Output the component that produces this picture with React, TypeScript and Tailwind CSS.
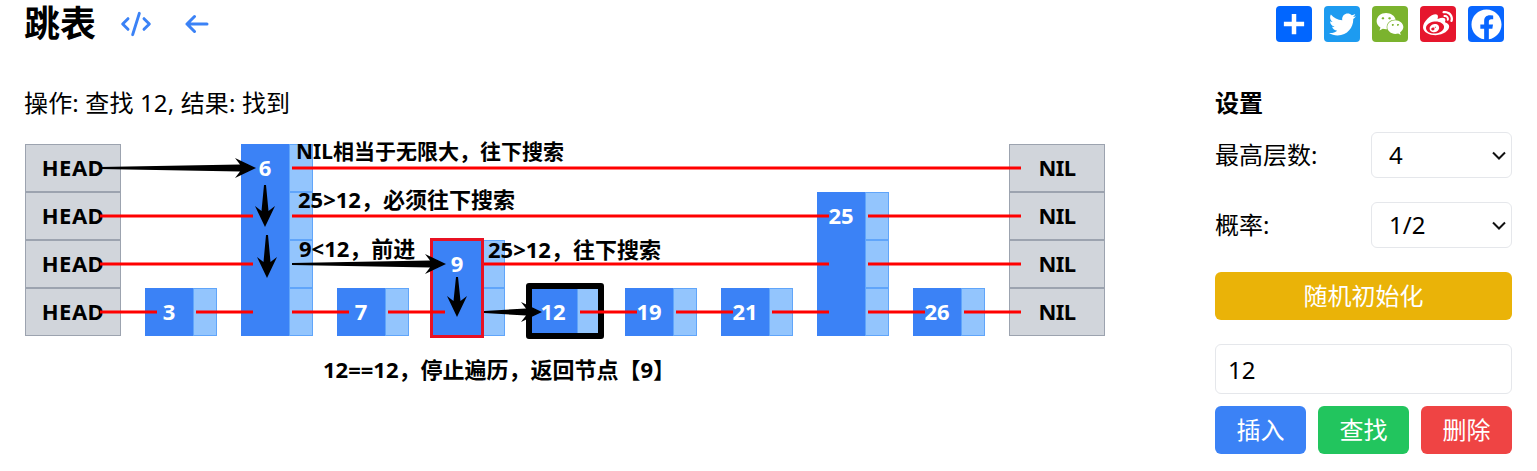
import React from 'react';
import { CodeXml } from 'lucide-react';
import { FaFacebook, FaTwitter, FaWeibo, FaWeixin } from 'react-icons/fa';

type Node = { value: number; levels: number };

const nodes: Node[] = [
  { value: 3, levels: 1 },
  { value: 6, levels: 4 },
  { value: 7, levels: 1 },
  { value: 9, levels: 2 },
  { value: 12, levels: 1 },
  { value: 19, levels: 1 },
  { value: 21, levels: 1 },
  { value: 25, levels: 3 },
  { value: 26, levels: 1 },
];

// red pointers, in page coordinates
const redLines: [number, number, number][] = [
  [292, 1021, 168],
  [100, 253, 216],
  [292, 829, 216],
  [868, 1021, 216],
  [100, 253, 264],
  [484, 829, 264],
  [868, 1021, 264],
  [100, 157, 312],
  [196, 253, 312],
  [292, 349, 312],
  [388, 445, 312],
  [580, 637, 312],
  [676, 733, 312],
  [772, 829, 312],
  [868, 925, 312],
  [964, 1021, 312],
];

function Arrow({ x1, y1, x2, y2 }: { x1: number; y1: number; x2: number; y2: number }) {
  const len = Math.hypot(x2 - x1, y2 - y1);
  const ux = (x2 - x1) / len;
  const uy = (y2 - y1) / len;
  const pt = (along: number, side: number) =>
    `${x1 + ux * along - uy * side},${y1 + uy * along + ux * side}`;
  const head = 21;
  const points = [
    pt(0, -1),
    pt(len - head + 5, -3.5),
    pt(len - head, -10),
    pt(len, 0),
    pt(len - head, 10),
    pt(len - head + 5, 3.5),
    pt(0, 1),
  ].join(' ');
  return <polygon points={points} fill="#000" />;
}

function Column({ node }: { node: Node }) {
  return (
    <div className="flex h-[192px] w-[72px] items-end">
      <div
        className={
          node.levels === 4
            ? 'h-[192px] w-12 bg-[#3b82f6]'
            : node.levels === 3
              ? 'h-36 w-12 bg-[#3b82f6]'
              : node.levels === 2
                ? 'h-24 w-12 bg-[#3b82f6]'
                : 'h-12 w-12 bg-[#3b82f6]'
        }
      >
        <div className="flex h-12 items-center justify-center text-[22px] font-bold text-white">{node.value}</div>
      </div>
      <div className="flex w-6 flex-col">
        {Array.from({ length: node.levels }).map((_, i) => (
          <div key={i} className="h-12 border border-[#60a5fa] bg-[#93c5fd]" />
        ))}
      </div>
    </div>
  );
}

function EndColumn({ label }: { label: string }) {
  return (
    <div className="flex w-24 flex-col">
      {[0, 1, 2, 3].map(i => (
        <div
          key={i}
          className={
            label === 'HEAD'
              ? 'flex h-12 items-center justify-center border border-[#9ca3af] bg-[#d1d5db] text-[22px] font-bold tracking-[0.5px] text-black'
              : 'flex h-12 items-center justify-center border border-[#9ca3af] bg-[#d1d5db] text-[22px] font-bold tracking-[-0.5px] text-black'
          }
        >
          {label}
        </div>
      ))}
    </div>
  );
}

function SelectBox({ value, options }: { value: string; options: string[] }) {
  return (
    <div className="relative h-[46px] w-[141px]">
      <select
        defaultValue={value}
        className="h-full w-full appearance-none rounded-md border border-[#e5e7eb] bg-white pl-[17px] text-2xl"
      >
        {options.map(o => (
          <option key={o}>{o}</option>
        ))}
      </select>
      <svg className="pointer-events-none absolute top-[17px] right-[6px]" width="14" height="12" viewBox="0 0 14 12">
        <path d="M1 3.5l6 6 6-6" fill="none" stroke="#111" strokeWidth="2" />
      </svg>
    </div>
  );
}

function Diagram() {
  return (
    <div className="relative mt-[25px] ml-px h-[192px] w-[1080px]">
      <div className="flex gap-6">
        <EndColumn label="HEAD" />
        {nodes.map(n => (
          <Column key={n.value} node={n} />
        ))}
        <EndColumn label="NIL" />
      </div>

      {/* highlighted nodes */}
      <div className="absolute top-[94px] left-[405px] h-[100px] w-[54px] border-[3px] border-[#e81123]" />
      <div className="absolute top-[139px] left-[501px] h-[56px] w-[78px] rounded-[3px] border-[6px] border-black" />

      <svg className="absolute top-[-144px] left-[-25px]" width="1130" height="340">
        {redLines.map(([x1, x2, y], i) => (
          <line key={i} x1={x1} x2={x2} y1={y} y2={y} stroke="#ff0000" strokeWidth="3" />
        ))}
        <Arrow x1={100} y1={168} x2={256} y2={168} />
        <Arrow x1={265} y1={185} x2={265} y2={227} />
        <Arrow x1={267} y1={235} x2={267} y2={278} />
        <Arrow x1={292} y1={264} x2={446} y2={264} />
        <Arrow x1={457} y1={277} x2={457} y2={317} />
        <Arrow x1={484} y1={312} x2={542} y2={312} />
      </svg>

      <span className="absolute top-[-7px] left-[271px] text-[21px] leading-7 font-bold whitespace-nowrap text-black">
        NIL相当于无限大，往下搜索
      </span>
      <span className="absolute top-[41px] left-[273px] text-[22px] leading-7 font-bold whitespace-nowrap text-black">
        25&gt;12，必须往下搜索
      </span>
      <span className="absolute top-[90px] left-[274px] text-[22px] leading-7 font-bold whitespace-nowrap text-black">
        9&lt;12，前进
      </span>
      <span className="absolute top-[91px] left-[463px] text-[22px] leading-7 font-bold whitespace-nowrap text-black">
        25&gt;12，往下搜索
      </span>
      <span className="absolute top-[211px] left-[298px] text-[22px] leading-7 font-bold whitespace-nowrap text-black">
        12==12，停止遍历，返回节点【9】
      </span>
    </div>
  );
}

function ShareIcons() {
  return (
    <div className="flex gap-3">
      <a className="flex h-9 w-9 items-center justify-center rounded bg-[#0166ff] text-white">
        <svg width="36" height="36" viewBox="0 0 32 32" fill="#fff">
          <path d="M14 7h4v7h7v4h-7v7h-4v-7H7v-4h7z" />
        </svg>
      </a>
      <a className="flex h-9 w-9 items-center justify-center rounded bg-[#1d9bf0] text-white">
        <FaTwitter size={27} />
      </a>
      <a className="flex h-9 w-9 items-center justify-center rounded bg-[#7bb32e] text-white">
        <FaWeixin size={28} />
      </a>
      <a className="flex h-9 w-9 items-center justify-center rounded bg-[#e6162d] text-white">
        <FaWeibo size={30} />
      </a>
      <a className="flex h-9 w-9 items-center justify-center rounded bg-[#0866ff] text-white">
        <FaFacebook size={31} />
      </a>
    </div>
  );
}

export default function App() {
  return (
    <div className="h-[471px] overflow-hidden bg-white font-['Noto_Sans','Noto_Sans_CJK_SC',sans-serif] text-2xl text-black">
      <header className="flex items-center justify-between pt-1.5 pr-[33px] pl-6">
        <div className="flex items-center">
          <h1 className="text-4xl leading-9 font-bold">跳表</h1>
          <CodeXml className="ml-6 text-[#3b82f6]" size={32} strokeWidth={2.2} />
          <svg className="ml-[33px]" width="24" height="24" viewBox="0 0 24 24" fill="none" stroke="#3b82f6" strokeWidth="3" strokeLinecap="round" strokeLinejoin="round">
            <path d="M22 12H2M9.5 4.5L2 12l7.5 7.5" />
          </svg>
        </div>
        <ShareIcons />
      </header>

      <main className="mt-[45px] flex justify-between pr-[25px] pl-6">
        <div>
          <p className="h-8 leading-8 tracking-[0.15px]">操作: 查找 12, 结果: 找到</p>
          <Diagram />
        </div>

        <aside className="flex w-[297px] flex-col">
          <h2 className="h-8 leading-8 font-bold">设置</h2>
          <label className="mt-[13px] flex items-center justify-between">
            最高层数:
            <SelectBox value="4" options={['3', '4', '5']} />
          </label>
          <label className="mt-6 flex items-center justify-between">
            概率:
            <SelectBox value="1/2" options={['1/2', '1/4']} />
          </label>
          <button className="mt-6 h-12 rounded-md bg-[#eab308] text-white">随机初始化</button>
          <input
            defaultValue="12"
            className="mt-6 h-[50px] rounded-md border border-[#e5e7eb] bg-white px-3"
          />
          <div className="mt-3 grid grid-cols-3 gap-3">
            <button className="h-12 rounded-md bg-[#3b82f6] text-white">插入</button>
            <button className="h-12 rounded-md bg-[#22c55e] text-white">查找</button>
            <button className="h-12 rounded-md bg-[#ef4444] text-white">删除</button>
          </div>
        </aside>
      </main>
    </div>
  );
}
